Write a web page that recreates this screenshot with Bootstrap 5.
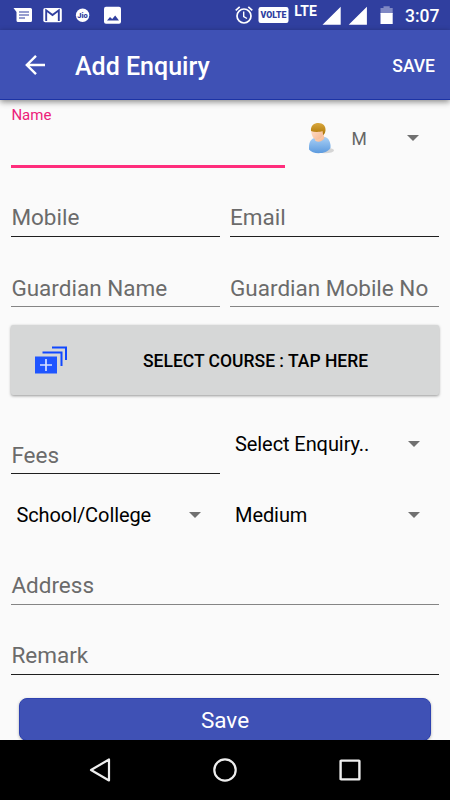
<!DOCTYPE html>
<html lang="en">
<head>
<meta charset="utf-8">
<meta name="viewport" content="width=device-width, initial-scale=1">
<title>Add Enquiry</title>
<link href="https://cdn.jsdelivr.net/npm/bootstrap@5.3.0/dist/css/bootstrap.min.css" rel="stylesheet">
<style>
  body { font-family: Roboto, sans-serif; background: #fafafa; color: #000; width: 450px; height: 800px; overflow: hidden; }
  svg { display: block; flex: none; }
  .status-bar { height: 30px; background: #303f9f; color: #fff; padding: 0 10px 0 13px; }
  .status-bar .clock { font-size: 17.5px; line-height: 30px; font-weight: 500; width: 35px; white-space: nowrap; padding-top: 1px; }
  .app-bar { height: 70px; background: #3f51b5; color: #fff; padding: 0 15px 0 24px; border-bottom: 1px solid #1c33a5; box-shadow: 0 2px 6px rgba(0,0,0,.45); z-index: 2; }
  .app-title { font-size: 25px; font-weight: 500; line-height: 30px; margin: 5px 0 0 29px; }
  .app-action { font-size: 17.5px; font-weight: 500; line-height: 24px; margin-top: 2px; }
  .form-area { height: 640px; padding: 0 11.4px; overflow: hidden; }
  .field { font-size: 22.5px; line-height: 26px; color: #6b6b6b; border-bottom: 1px solid #1f1f1f; padding-bottom: 6px; white-space: nowrap; }
  .field.soft { border-bottom-color: #858585; }
  .field.tight { padding-bottom: 5px; }
  .pair { display: grid; grid-template-columns: 1fr 1fr; column-gap: 10px; }
  .h-name { height: 68px; }
  .h-mobile { height: 69px; }
  .h-row { height: 70px; }
  .h-fees { height: 79px; }
  .h-address { height: 74px; }
  .name-field { width: 274px; border-bottom: 3px solid #ff2d7c; color: #ec2079; font-size: 15px; line-height: 18px; padding-top: 6px; }
  .person { margin: 22px 0 0 20px; }
  .gender { font-size: 17.5px; line-height: 22px; color: #666; margin: 28px 0 0 14px; width: 56px; }
  .course-btn { height: 70px; margin-top: 18px; background: #d6d7d7; border-radius: 2px; box-shadow: 0 1px 3px rgba(0,0,0,.4); font-size: 17.5px; font-weight: 500; padding: 0 0 0 23px; }
  .course-btn .caption { margin-left: 61.6px; padding: 2px 0 0 13px; line-height: 22px; white-space: nowrap; }
  .spinner-line { font-size: 20px; line-height: 24px; letter-spacing: -.08px; padding: 0 19px 0 5px; }
  .beside-field { margin-bottom: 18px; }
  .spinner-row { padding: 29px 0 4px; }
  .save-btn { height: 43px; margin: 23px 7.6px 0; background: #3f51b5; color: #fff; border: 1px solid #2e42b0; border-radius: 8px; font-size: 22.5px; line-height: 26px; box-shadow: 0 1px 3px rgba(0,0,0,.3); padding: 1px 0 0; }
  .nav-keys { height: 60px; background: #000; padding: 0 88px; }
</style>
</head>
<body class="d-flex flex-column">

<header class="status-bar d-flex align-items-center flex-shrink-0">
  <!-- message -->
  <svg width="20" height="30" viewBox="0 0 20 30"><path fill="#fff" d="M.5 8H17.5q1.5 0 1.500 1.500V20.500q0 1.500-1.500 1.500H5q-1.500 0-1.500-1.500V12z"/><path stroke="#303f9f" stroke-width="1.200" d="M6 12h10M6 15h10M6 18h6"/></svg>
  <!-- mail -->
  <svg class="ms-2" width="24" height="30" viewBox="0 0 24 30"><rect x="2.300" y="8" width="18.500" height="14.200" rx="1.800" fill="#fff"/><path fill="none" stroke="#303f9f" stroke-width="1.900" d="M5.200 21V10.300L11.500 15l6.300-4.700V21"/></svg>
  <!-- carrier -->
  <svg class="ms-2" width="20" height="30" viewBox="0 0 20 30"><circle cx="9.600" cy="15.200" r="6.700" fill="#fff"/><text x="9.600" y="17.800" text-anchor="middle" font-size="7.500" font-weight="900" fill="#303f9f">Jio</text></svg>
  <!-- picture -->
  <svg class="ms-2" width="24" height="30" viewBox="0 0 24 30"><rect x="3" y="6.700" width="17" height="17" rx="2" fill="#fff"/><path fill="#303f9f" d="M6 20.500l3-3.500 2.200 2 3-3.500 3.800 5z"/></svg>
  <!-- alarm -->
  <svg class="ms-auto" width="20" height="30" viewBox="0 0 20 30"><g fill="none" stroke="#fff"><circle cx="10" cy="16" r="7" stroke-width="1.700"/><path stroke-width="1.700" d="M1.700 10.300l4-3.400M18.300 10.300l-4-3.400"/><path stroke-width="1.400" d="M9.700 11.500v5l3.300 2"/></g></svg>
  <svg width="40" height="30" viewBox="0 0 40 30"><rect x="4.500" y="7" width="30" height="16" rx="2.200" fill="#fff"/><text x="19.500" y="18" text-anchor="middle" font-size="9.200" font-weight="900" fill="#303f9f" textLength="26" lengthAdjust="spacingAndGlyphs">VOLTE</text></svg>
  <svg width="24" height="30" viewBox="0 0 24 30"><text x=".300" y="16.300" font-size="14.500" font-weight="700" fill="#fff" textLength="22.500" lengthAdjust="spacingAndGlyphs">LTE</text></svg>
  <svg width="52" height="30" viewBox="0 0 52 30"><path fill="#fff" d="M4.500 24.700L22.700 6.700v18zM30.700 24.700L48.900 6.700v18z"/></svg>
  <svg width="35" height="30" viewBox="0 0 35 30"><path fill="#7f88c4" d="M10.500 8h3V6.200h6.200V8h3v6H10.500z"/><path fill="#fff" d="M10.500 13h12.200v11H10.500z"/></svg>
  <span class="clock">3:07</span>
</header>

<div class="app-bar d-flex align-items-center flex-shrink-0 position-relative">
  <svg width="22" height="22" viewBox="0 0 22 22"><path fill="none" stroke="#fff" stroke-width="2.400" d="M21 11H3M12 1.800L2.800 11l9.200 9.200"/></svg>
  <h1 class="app-title">Add Enquiry</h1>
  <span class="app-action ms-auto">SAVE</span>
</div>

<main class="form-area flex-shrink-0">
  <div class="d-flex h-name">
    <label class="name-field">Name</label>
    <svg class="person" width="32" height="34" viewBox="0 0 32 34">
      <defs>
        <linearGradient id="shirt" x1="0" y1="0" x2="0" y2="1"><stop offset="0" stop-color="#a9d0f6"/><stop offset="1" stop-color="#5c9ade"/></linearGradient>
        <linearGradient id="hair" x1="0" y1="0" x2="0" y2="1"><stop offset="0" stop-color="#d9a83e"/><stop offset="1" stop-color="#ac7403"/></linearGradient>
        <linearGradient id="skin" x1="0" y1="0" x2="1" y2="1"><stop offset="0" stop-color="#ffe0cc"/><stop offset="1" stop-color="#f5b48c"/></linearGradient>
      </defs>
      <ellipse cx="20" cy="28.500" rx="9" ry="2.700" fill="#ccc" opacity=".8"/>
      <path fill="url(#shirt)" d="M4 25c0-5 2-8.500 6.500-9.500l9.500-.5c3.500 1 6 5 5.500 11-4 6.500-18 6.800-21.500 1.500z"/>
      <path fill="url(#skin)" d="M11 14l-1 4.500c3 2.300 7 1.500 9.500-2.500l-1-4z"/>
      <path fill="url(#skin)" d="M6.200 7c-.3 5 1.400 9.500 5 11 3.500 0 6.900-4 8.300-8l-2-4.500z"/>
      <path fill="url(#hair)" d="M6 9C5.500 3.500 9 1 13.500 1c4.500 0 7.500 3 7 7.500-.3 2.500-1.300 4-2.300 4.500l-.7-4c-3 1.200-8 1.200-11.500 0z"/>
    </svg>
    <span class="gender">M</span>
    <svg width="12" height="41" viewBox="0 0 12 41"><path fill="#707070" d="M0 35h12l-6 6z"/></svg>
  </div>

  <div class="pair align-items-end h-mobile">
    <label class="field">Mobile</label>
    <label class="field">Email</label>
  </div>
  <div class="pair align-items-end h-row">
    <label class="field soft tight">Guardian Name</label>
    <label class="field soft tight">Guardian Mobile No</label>
  </div>

  <button type="button" class="course-btn btn w-100 d-flex align-items-center border-0 text-black">
    <svg width="34" height="28" viewBox="0 0 34 28"><path fill="#1f55ff" d="M1 10.500h22v17H1z"/><path fill="none" stroke="#1048ff" stroke-width="2" d="M8.500 6.500h19V20M18 1.600h14V14"/><path stroke="#d6e0ff" stroke-width="1.700" d="M12 13v12M6 19h12"/></svg>
    <span class="caption flex-fill text-start">SELECT COURSE : TAP HERE</span>
  </button>

  <div class="pair align-items-end h-fees">
    <label class="field tight">Fees</label>
    <div class="spinner-line beside-field d-flex align-items-center justify-content-between">
      <span>Select Enquiry..</span>
      <svg width="12" height="6" viewBox="0 0 12 6"><path fill="#707070" d="M0 0h12L6 6z"/></svg>
    </div>
  </div>
  <div class="pair align-items-end spinner-row">
    <div class="spinner-line d-flex align-items-center justify-content-between">
      <span>School/College</span>
      <svg width="12" height="6" viewBox="0 0 12 6"><path fill="#707070" d="M0 0h12L6 6z"/></svg>
    </div>
    <div class="spinner-line d-flex align-items-center justify-content-between">
      <span>Medium</span>
      <svg width="12" height="6" viewBox="0 0 12 6"><path fill="#707070" d="M0 0h12L6 6z"/></svg>
    </div>
  </div>

  <div class="d-flex align-items-end h-address">
    <label class="field soft w-100">Address</label>
  </div>
  <div class="d-flex align-items-end h-row">
    <label class="field w-100">Remark</label>
  </div>
  <div class="d-grid">
    <button type="button" class="save-btn btn">Save</button>
  </div>
</main>

<nav class="nav-keys d-flex align-items-center justify-content-between flex-shrink-0">
  <svg width="24" height="26" viewBox="0 0 24 26"><path fill="none" stroke="#eee" stroke-width="2.200" stroke-linejoin="round" d="M21 2.500v21L3 13z"/></svg>
  <svg width="26" height="26" viewBox="0 0 26 26"><circle cx="13" cy="13" r="10.700" fill="none" stroke="#eee" stroke-width="2.200"/></svg>
  <svg width="24" height="24" viewBox="0 0 24 24"><rect x="2.600" y="2.600" width="18.800" height="18.800" rx=".5" fill="none" stroke="#eee" stroke-width="2.400"/></svg>
</nav>

<script src="https://cdn.jsdelivr.net/npm/bootstrap@5.3.0/dist/js/bootstrap.bundle.min.js"></script>
</body>
</html>
